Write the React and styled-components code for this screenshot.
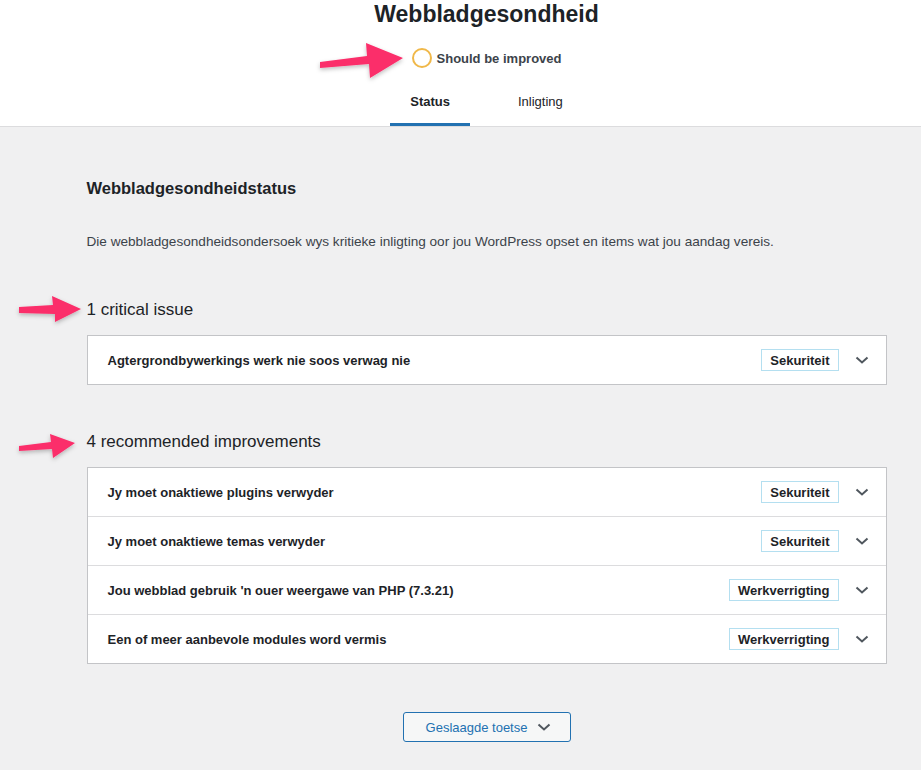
import React from "react";
import styled, { createGlobalStyle } from "styled-components";

const GlobalStyle = createGlobalStyle`
  html, body {
    margin: 0;
    padding: 0;
    background: #f0f0f1;
    overflow: hidden;
  }
  body {
    font-family: "Liberation Sans", Arial, sans-serif;
    color: #1d2327;
    font-size: 13px;
  }
`;

const Page = styled.div`
  position: relative;
  width: 921px;
  min-height: 770px;
  overflow: hidden;
`;

/* the screenshot is cropped: the real layout centre sits at x≈486 */
const Header = styled.header`
  background: #fff;
  border-bottom: 1px solid #dcdcde;
  text-align: center;
  padding-left: 52px;
`;

const Title = styled.h1`
  margin: 0;
  font-size: 23px;
  line-height: 28px;
  font-weight: 700;
  color: #1d2327;
`;

const Rating = styled.div`
  margin-top: 20px;
  display: flex;
  align-items: center;
  justify-content: center;
  gap: 5px;
  height: 20px;
  font-size: 13px;
  font-weight: 700;
  color: #3c434a;
`;

const Ring = styled.span`
  width: 16px;
  height: 16px;
  border-radius: 50%;
  border: 2px solid #f0b849;
`;

const Tabs = styled.nav`
  margin-top: 12px;
  display: flex;
  justify-content: center;
  gap: 28px;
`;

const Tab = styled.a`
  display: block;
  padding: 12px 20px 11px;
  line-height: 20px;
  font-size: 13px;
  color: #1d2327;
  font-weight: ${(p) => (p.$active ? 700 : 400)};
  border-bottom: 3px solid ${(p) => (p.$active ? "#2271b1" : "transparent")};
  text-decoration: none;
`;

const Body = styled.div`
  padding-left: 52px;
`;

const Main = styled.main`
  width: 800px;
  margin: 0 auto;
  padding-top: 50px;
`;

const Heading = styled.h2`
  margin: 0;
  font-size: 16.5px;
  line-height: 22px;
  font-weight: 700;
`;

const Intro = styled.p`
  margin: 34px 0 0;
  line-height: 18px;
  font-size: 13.6px;
  color: #3c434a;
`;

const GroupTitle = styled.h3`
  margin: ${(p) => p.$top}px 0 0;
  font-size: 17px;
  line-height: 22px;
  font-weight: 400;
  color: #1d2327;
`;

const Accordion = styled.div`
  margin-top: 14px;
  background: #fff;
  border: 1px solid #c3c4c7;
`;

const Row = styled.div`
  display: flex;
  align-items: center;
  height: 48px;
  padding: 0 17px 0 20px;
  box-sizing: border-box;
  & + & {
    border-top: 1px solid #dcdcde;
    height: 49px;
  }
`;

const RowTitle = styled.span`
  flex: 1;
  font-weight: 700;
  font-size: 13px;
  color: #1d2327;
`;

const Badge = styled.span`
  display: inline-flex;
  align-items: center;
  height: 20px;
  padding: 0 8px;
  border: 1px solid #b4dff0;
  font-weight: 700;
  font-size: 13px;
  color: #1d2327;
`;

const Chevron = ({ color = "#50575e" }) => (
  <svg width="14" height="10" viewBox="0 0 14 10">
    <path d="M1.5 2.5 L7 7.5 L12.5 2.5" fill="none" stroke={color} strokeWidth="2" />
  </svg>
);

const ChevronWrap = styled.span`
  display: flex;
  margin-left: 16px;
`;

const Footer = styled.div`
  display: flex;
  justify-content: center;
  margin-top: 48px;
`;

const ToggleButton = styled.button`
  display: flex;
  align-items: center;
  gap: 10px;
  height: 30px;
  width: 168px;
  justify-content: center;
  background: #f6f7f7;
  border: 1px solid #2271b1;
  border-radius: 3px;
  color: #2271b1;
  font-family: inherit;
  font-size: 13px;
  font-weight: 500;
  padding: 0 0 0 4px;
`;

const Overlay = styled.svg`
  position: absolute;
  left: 0;
  top: 0;
  pointer-events: none;
`;

const arrows = [
  "320,62 367,56 366,43 403,58 370,78 369,64 320,68",
  "19,307 53,305 52,296 81,309 55,322 55,314 19,313",
  "19,446 51,442 50,434 75,443 53,458 52,449 19,451",
];

const critical = [{ title: "Agtergrondbywerkings werk nie soos verwag nie", tag: "Sekuriteit" }];

const recommended = [
  { title: "Jy moet onaktiewe plugins verwyder", tag: "Sekuriteit" },
  { title: "Jy moet onaktiewe temas verwyder", tag: "Sekuriteit" },
  { title: "Jou webblad gebruik 'n ouer weergawe van PHP (7.3.21)", tag: "Werkverrigting" },
  { title: "Een of meer aanbevole modules word vermis", tag: "Werkverrigting" },
];

const IssueList = ({ items }) => (
  <Accordion>
    {items.map((it) => (
      <Row key={it.title}>
        <RowTitle>{it.title}</RowTitle>
        <Badge>{it.tag}</Badge>
        <ChevronWrap>
          <Chevron />
        </ChevronWrap>
      </Row>
    ))}
  </Accordion>
);

export default function App() {
  return (
    <Page>
      <GlobalStyle />
      <Header>
        <Title>Webbladgesondheid</Title>
        <Rating>
          <Ring />
          Should be improved
        </Rating>
        <Tabs>
          <Tab $active href="#">Status</Tab>
          <Tab href="#">Inligting</Tab>
        </Tabs>
      </Header>
      <Body>
        <Main>
          <Heading>Webbladgesondheidstatus</Heading>
          <Intro>
            Die webbladgesondheidsondersoek wys kritieke inligting oor jou WordPress opset en items wat jou aandag vereis.
          </Intro>
          <GroupTitle $top={48}>1 critical issue</GroupTitle>
          <IssueList items={critical} />
          <GroupTitle $top={46}>4 recommended improvements</GroupTitle>
          <IssueList items={recommended} />
          <Footer>
            <ToggleButton>
              Geslaagde toetse
              <Chevron />
            </ToggleButton>
          </Footer>
        </Main>
      </Body>
      <Overlay width="921" height="770">
        <defs>
          <filter id="shadow" x="-20%" y="-20%" width="140%" height="160%">
            <feDropShadow dx="0" dy="2" stdDeviation="2" floodColor="#000" floodOpacity="0.25" />
          </filter>
        </defs>
        {arrows.map((pts) => (
          <polygon key={pts} points={pts} fill="#fb2d6a" filter="url(#shadow)" strokeLinejoin="round" />
        ))}
      </Overlay>
    </Page>
  );
}
